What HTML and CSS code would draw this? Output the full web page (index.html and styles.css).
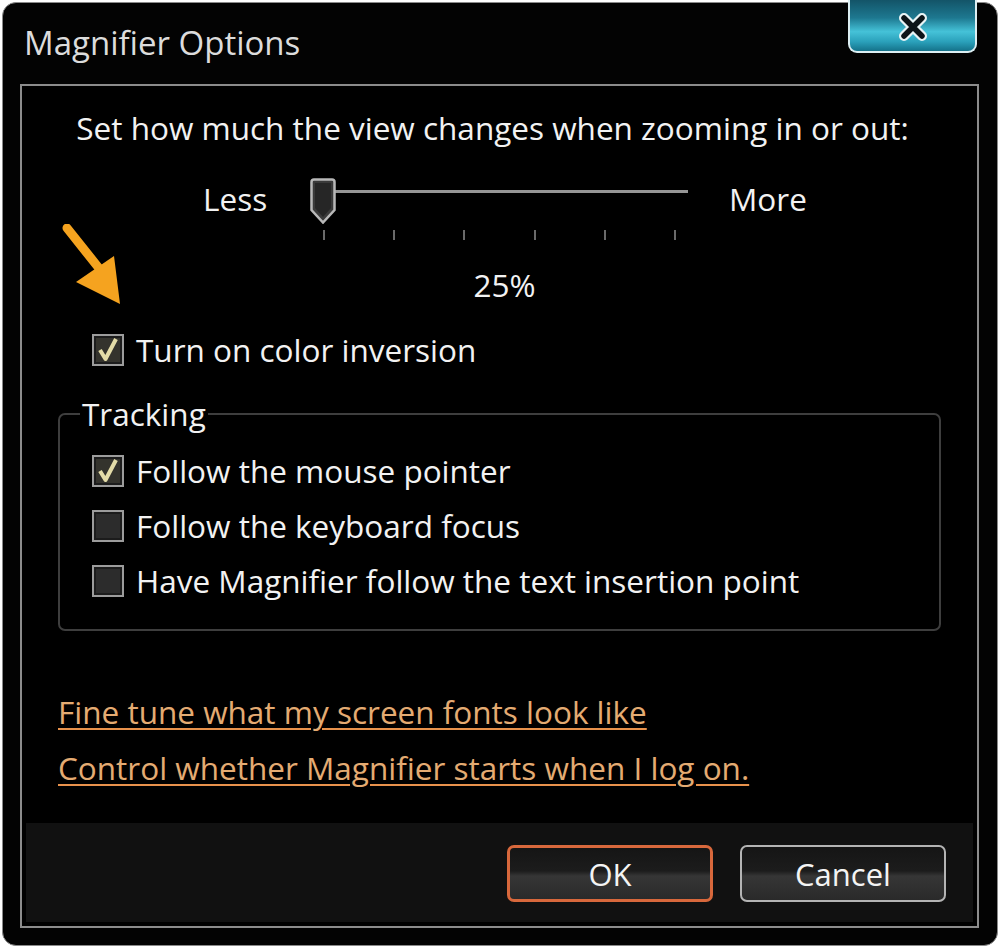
FILE: index.html
```html
<!DOCTYPE html>
<html lang="en">
<head>
    <meta charset="UTF-8">
    <meta name="viewport" content="width=device-width, initial-scale=1.0">
    <title>Magnifier Options</title>
    <link rel="stylesheet" href="styles.css">
</head>
<body>

    <div class="window">

        <div class="titlebar">
            <span class="title">Magnifier Options</span>
            <button class="close" title="Close">
                <svg width="34" height="28" viewBox="0 0 34 28">
                    <path d="M8 5 L26 23 M26 5 L8 23" stroke="#e8f4f6" stroke-width="10" stroke-linecap="round"/>
                    <path d="M8 5 L26 23 M26 5 L8 23" stroke="#0c1418" stroke-width="5.5" stroke-linecap="round"/>
                </svg>
            </button>
        </div>

        <div class="panel">
            <div class="main">

                <svg class="arrow" width="80" height="90" viewBox="0 0 80 90">
                    <path d="M7 4 L42 48" stroke="#f5a31f" stroke-width="9" stroke-linecap="round"/>
                    <polygon points="16,58 54,32 60,80" fill="#f5a31f"/>
                </svg>

                <p class="prompt">Set how much the view changes when zooming in or out:</p>

                <div class="slider-row">
                    <span class="slider-label">Less</span>
                    <div class="slider">
                        <div class="track-area">
                            <div class="track"></div>
                            <svg class="thumb" width="26" height="46" viewBox="0 0 26 46">
                                <path d="M4 1.5 H22 Q24.5 1.5 24.5 4 V32 L13 44.5 L1.5 32 V4 Q1.5 1.5 4 1.5 Z" fill="#3a3a3a" stroke="#b8b8b8" stroke-width="2.5"/>
                                <path d="M5 5 H21 V30 L13 39 L5 30 Z" fill="#262626"/>
                            </svg>
                        </div>
                        <div class="ticks">
                            <i></i><i></i><i></i><i></i><i></i><i></i>
                        </div>
                    </div>
                    <span class="slider-label more">More</span>
                </div>

                <p class="percent">25%</p>

                <label class="check-row first">
                    <svg class="box" width="32" height="32" viewBox="0 0 32 32">
                        <rect x="1" y="1" width="30" height="30" fill="#1c1c1c" stroke="#9c9c9c" stroke-width="2"/>
                        <rect x="4" y="4" width="24" height="24" fill="#34332d"/>
                        <path d="M8 16 L13.5 25 L24 5" fill="none" stroke="#e4dca8" stroke-width="4" stroke-linejoin="round"/>
                    </svg>
                    Turn on color inversion
                </label>

                <fieldset class="tracking">
                    <legend>Tracking</legend>

                    <label class="check-row">
                        <svg class="box" width="32" height="32" viewBox="0 0 32 32">
                            <rect x="1" y="1" width="30" height="30" fill="#1c1c1c" stroke="#9c9c9c" stroke-width="2"/>
                            <rect x="4" y="4" width="24" height="24" fill="#34332d"/>
                            <path d="M8 16 L13.5 25 L24 5" fill="none" stroke="#e4dca8" stroke-width="4" stroke-linejoin="round"/>
                        </svg>
                        Follow the mouse pointer
                    </label>

                    <label class="check-row">
                        <svg class="box" width="32" height="32" viewBox="0 0 32 32">
                            <rect x="1" y="1" width="30" height="30" fill="#1c1c1c" stroke="#9c9c9c" stroke-width="2"/>
                            <rect x="4" y="4" width="24" height="24" fill="#2c2c2c"/>
                        </svg>
                        Follow the keyboard focus
                    </label>

                    <label class="check-row">
                        <svg class="box" width="32" height="32" viewBox="0 0 32 32">
                            <rect x="1" y="1" width="30" height="30" fill="#1c1c1c" stroke="#9c9c9c" stroke-width="2"/>
                            <rect x="4" y="4" width="24" height="24" fill="#2c2c2c"/>
                        </svg>
                        Have Magnifier follow the text insertion point
                    </label>
                </fieldset>

                <a class="link first" href="#">Fine tune what my screen fonts look like</a>
                <a class="link" href="#">Control whether Magnifier starts when I log on.</a>

            </div>

            <div class="footer">
                <button class="btn ok">OK</button>
                <button class="btn">Cancel</button>
            </div>
        </div>

    </div>

</body>
</html>
```

FILE: styles.css
```css
body{
    margin: 0;
    background-color: #fff;
    font-family: "Open Sans", "DejaVu Sans", sans-serif;
    color: #f2f2f2;
}

.window{
    margin: 2px;
    height: 944px;
    box-sizing: border-box;
    background-color: #030303;
    border: 1px solid #8a8a8a;
    border-radius: 14px;
}

/* title bar */

.titlebar{
    height: 81px;
    display: flex;
    justify-content: space-between;
    align-items: flex-start;
}

.title{
    padding: 20px 0 0 21px;
    font-size: 33px;
    line-height: 40px;
    color: #dcdcdc;
}

.close{
    margin: -3px 20px 0 0;
    width: 129px;
    height: 53px;
    padding: 0;
    border: 2px solid #dceef2;
    border-top: none;
    border-radius: 0 0 9px 9px;
    background: linear-gradient(#135468 0%, #1d7890 35%, #45c2d8 62%, #2aa0ba 82%, #14728a 100%);
    display: flex;
    align-items: center;
    justify-content: center;
}

.close svg{
    margin-top: 2px;
}

/* panel */

.panel{
    margin: 0 18px 17px 17px;
    height: 844px;
    box-sizing: border-box;
    border: 2px solid #8c8c8c;
    padding: 4px;
    background-color: #000;
    display: flex;
    flex-direction: column;
}

.main{
    position: relative;
    height: 733px;
    font-size: 31.5px;
}

.arrow{
    position: absolute;
    left: 34px;
    top: 134px;
}

.prompt{
    margin: 18px 14px 0 0;
    line-height: 40px;
    text-align: center;
}

/* slider */

.slider-row{
    margin-top: 30px;
    padding-left: 177px;
    display: flex;
    align-items: flex-start;
}

.slider-label{
    margin-top: 1px;
    line-height: 40px;
    width: 107px;
}

.slider-label.more{
    margin-left: 41px;
}

.slider{
    width: 378px;
}

.track-area{
    position: relative;
    height: 44px;
}

.track{
    position: absolute;
    left: 10px;
    right: 0;
    top: 12px;
    height: 3px;
    background-color: #969696;
}

.thumb{
    position: absolute;
    left: 0;
    top: 0;
}

.ticks{
    margin: 8px 0 0 13px;
    width: 353px;
    height: 10px;
    display: flex;
    justify-content: space-between;
}

.ticks i{
    width: 2px;
    height: 10px;
    background-color: #6a6a6a;
}

.percent{
    margin: 25px 0 0 10px;
    line-height: 40px;
    text-align: center;
}

/* checkboxes */

.check-row{
    display: flex;
    align-items: center;
    gap: 12px;
    height: 40px;
    line-height: 40px;
    white-space: nowrap;
}

.check-row.first{
    margin-top: 25px;
    padding-left: 66px;
}

.check-row + .check-row{
    margin-top: 15px;
}

.tracking{
    margin: 24px 32px 0 32px;
    padding: 17px 0 28px 0;
    border: 2px solid #3e3e3e;
    border-radius: 7px;
}

.tracking legend{
    margin-left: 20px;
    padding: 0 2px;
    line-height: 40px;
}

.tracking .check-row{
    padding-left: 32px;
}

/* links */

.link{
    display: block;
    width: max-content;
    margin-left: 32px;
    margin-top: 16px;
    line-height: 40px;
    color: #e4ab72;
    text-decoration: underline;
    text-decoration-color: #e8924c;
    text-decoration-thickness: 2px;
    text-underline-offset: 4px;
}

.link.first{
    margin-top: 61px;
}

/* footer */

.footer{
    height: 99px;
    background-color: #111;
    display: flex;
    justify-content: flex-end;
    align-items: center;
    gap: 27px;
    padding-right: 27px;
}

.btn{
    width: 206px;
    height: 57px;
    margin-top: 2px;
    font-family: "Open Sans", "DejaVu Sans", sans-serif;
    font-size: 31px;
    color: #f4f4f4;
    border: 2px solid #b4b4b4;
    border-radius: 7px;
    background: linear-gradient(#151515 0%, #1c1c1c 45%, #363636 55%, #2a2a2a 100%);
}

.btn.ok{
    border: 3px solid #d8683c;
}
```
